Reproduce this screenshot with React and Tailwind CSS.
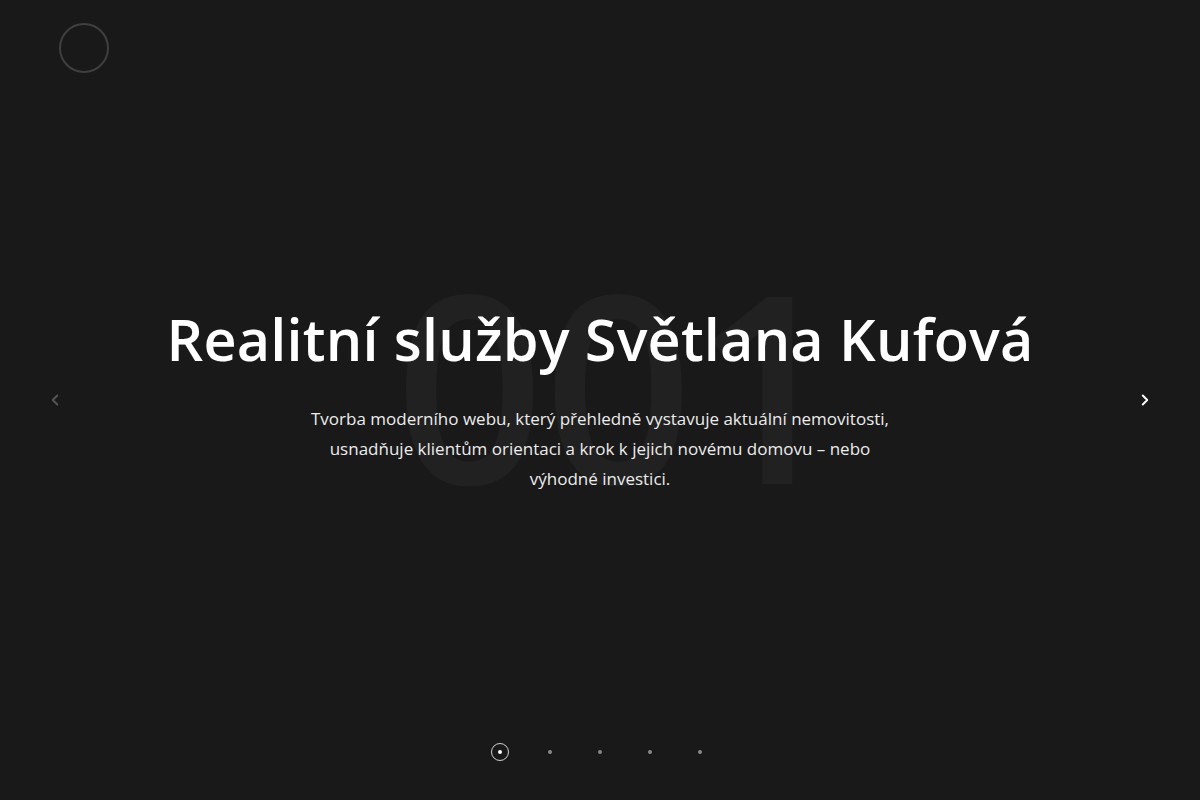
import { ChevronLeft, ChevronRight } from 'lucide-react'

const SLIDES = [1, 2, 3, 4, 5]

export default function App() {
  return (
    <div className="relative w-full h-[800px] bg-[#191919] overflow-hidden text-white" style={{ fontFamily: '"Open Sans", "Noto Sans", sans-serif' }}>
      {/* Slider */}
      <section className="h-full flex items-center justify-between px-[46px]">
        <button className="text-[#555]">
          <ChevronLeft size={18} strokeWidth={2.5} />
        </button>

        <div className="relative flex flex-col items-center text-center">
          <span aria-hidden="true" className="absolute top-[-54px] left-1/2 -translate-x-[46%] text-[262px] leading-none font-semibold text-[#212121] tracking-[-1px] select-none">
            001
          </span>
          <h1 className="relative text-[57.5px] leading-[70px] font-semibold tracking-[0.2px] mt-[-2px]">
            Realitní služby Světlana Kufová
          </h1>
          <p className="relative mt-[30px] w-[600px] text-[17px] leading-[30px] text-[#ececec]">
            Tvorba moderního webu, který přehledně vystavuje aktuální nemovitosti, usnadňuje klientům orientaci a krok k jejich novému domovu – nebo výhodné investici.
          </p>
        </div>

        <button className="text-white">
          <ChevronRight size={18} strokeWidth={2.5} />
        </button>
      </section>

      {/* Header */}
      <header className="absolute top-[23px] left-[59px]">
        <div className="w-[50px] h-[50px] rounded-full border-2 border-[#3f3f3f]" />
      </header>

      {/* Pagination */}
      <nav className="absolute bottom-[39px] inset-x-0 flex justify-center gap-[32px]">
        {SLIDES.map((n, i) => (
          <div key={n} className={`w-[18px] h-[18px] rounded-full flex items-center justify-center ${i === 0 ? 'border border-[#d0d0d0]' : ''}`}>
            <span className={`w-[4px] h-[4px] rounded-full ${i === 0 ? 'bg-white' : 'bg-[#8a8a8a]'}`} />
          </div>
        ))}
      </nav>
    </div>
  )
}
